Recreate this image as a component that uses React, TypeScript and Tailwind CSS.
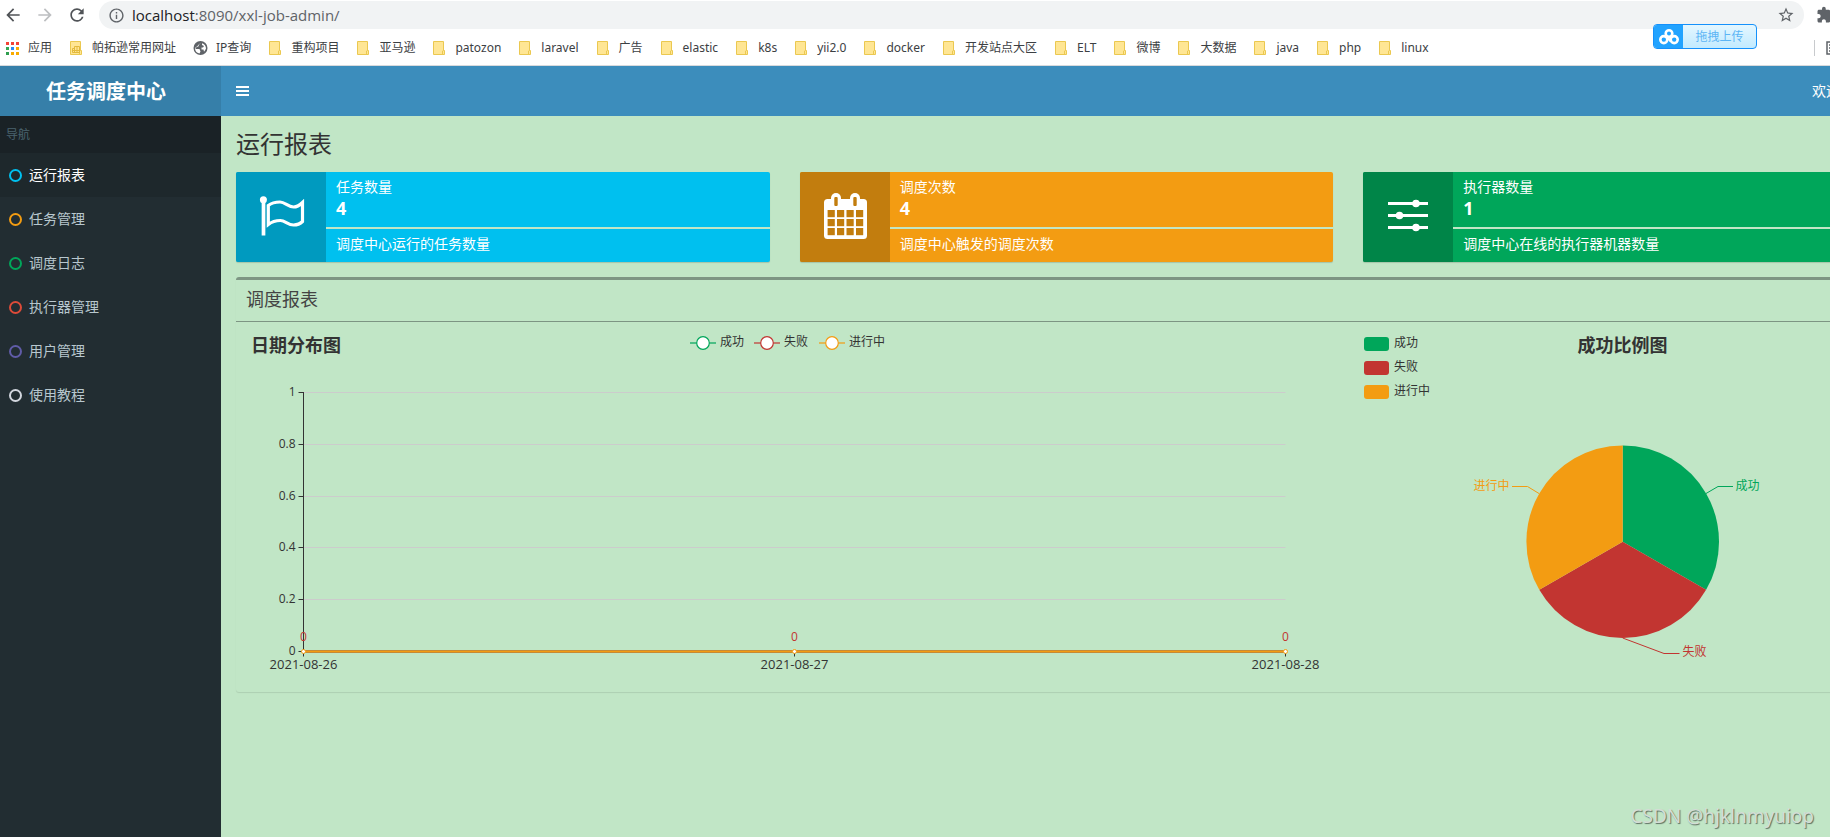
import type { ReactNode } from "react";
import {
  MdArrowBack,
  MdArrowForward,
  MdExtension,
  MdOutlineInfo,
  MdRefresh,
  MdStarBorder,
} from "react-icons/md";

type BookmarkKind = "apps" | "sheet" | "globe" | "folder";

const bookmarks: { label: string; icon: BookmarkKind }[] = [
  { label: "应用", icon: "apps" },
  { label: "帕拓逊常用网址", icon: "sheet" },
  { label: "IP查询", icon: "globe" },
  { label: "重构项目", icon: "folder" },
  { label: "亚马逊", icon: "folder" },
  { label: "patozon", icon: "folder" },
  { label: "laravel", icon: "folder" },
  { label: "广告", icon: "folder" },
  { label: "elastic", icon: "folder" },
  { label: "k8s", icon: "folder" },
  { label: "yii2.0", icon: "folder" },
  { label: "docker", icon: "folder" },
  { label: "开发站点大区", icon: "folder" },
  { label: "ELT", icon: "folder" },
  { label: "微博", icon: "folder" },
  { label: "大数据", icon: "folder" },
  { label: "java", icon: "folder" },
  { label: "php", icon: "folder" },
  { label: "linux", icon: "folder" },
];

const appDots = [
  "#f44336", "#f44336", "#f44336",
  "#34a853", "#2b8af7", "#f9ab00",
  "#2f9e4f", "#f9ab00", "#f9ab00",
];

function BookmarkIcon({ kind }: { kind: BookmarkKind }) {
  if (kind === "globe") {
    return (
      <svg viewBox="0 0 16 16" className="size-4 shrink-0" aria-hidden="true">
        <circle cx="8.500" cy="8" r="7" fill="#5f6368" />
        <path d="M9 3L6.500 4.500L7 6L4 7.500L3.500 9H7.500L8.500 11.500L7.500 13.500C4.500 13 3 11 3 8" fill="#fff" />
        <path d="M10 3.200C12.500 4 14 6 14 8.500C13.600 9.800 12.800 11 12 11.800L11.500 9.500H9.500V7.500H11L12 6L10 5Z" fill="#fff" />
      </svg>
    );
  }
  if (kind === "apps") {
    return (
      <svg viewBox="0 0 16 16" className="size-4 shrink-0" aria-hidden="true">
        {appDots.map((c, i) => (
          <rect key={i} x={2 + (i % 3) * 5} y={2 + Math.floor(i / 3) * 5} width="3" height="3" fill={c} />
        ))}
      </svg>
    );
  }
  return (
    <svg viewBox="0 0 16 16" className="size-4 shrink-0" aria-hidden="true">
      <path d="M2.5 1.5h10v9h1v4h-11z" fill="#ffe694" stroke="#ebc850" />
      <path d="M11.5 14.5v-3.5l1-0.5" fill="none" stroke="#ebc850" />
      {kind === "sheet" && (
        <path d="M6.5 6.5h5v6h-7v-4h2zM4.5 10.5h7M6.5 8v4.500M9 6.500v6" fill="none" stroke="#e3b93c" />
      )}
    </svg>
  );
}

function BrowserBar() {
  return (
    <div className="relative border-b border-[#d8dadd] bg-white">
      <div className="flex h-[30px] items-center gap-3 pl-[3px]">
        <button type="button" aria-label="后退" className="text-[#505357]">
          <MdArrowBack className="size-5" />
        </button>
        <button type="button" aria-label="前进" className="text-[#bdbfc1]">
          <MdArrowForward className="size-5" />
        </button>
        <button type="button" aria-label="刷新" className="text-[#505357]">
          <MdRefresh className="size-5" />
        </button>
        <div className="flex h-7 flex-1 items-center rounded-full bg-[#f1f3f4] px-[9px]">
          <MdOutlineInfo className="size-[17px] shrink-0 text-[#5f6368]" />
          <a href="#url" className="flex-1 pl-[7px] text-[15px] leading-7 text-[#5f6368]">
            <span className="text-[#202124]">localhost</span>:8090/xxl-job-admin/
          </a>
          <button type="button" aria-label="收藏" className="text-[#5f6368]">
            <MdStarBorder className="size-[18px]" />
          </button>
        </div>
        <button type="button" aria-label="扩展程序" className="-mr-1 w-[18px] overflow-hidden text-[#5f6368]">
          <MdExtension className="size-[18px]" />
        </button>
      </div>
      <div className="flex h-[35px] items-center justify-between overflow-hidden">
        <nav className="flex items-center gap-4 pl-1">
          {bookmarks.map((b) => (
            <a
              key={b.label}
              href="#bookmark"
              className="flex items-center gap-2 whitespace-nowrap font-['Noto_Sans','Noto_Sans_CJK_SC',sans-serif] text-[12px] leading-4 text-[#3c4043]"
            >
              <BookmarkIcon kind={b.icon} />
              {b.label}
            </a>
          ))}
        </nav>
        <div className="flex items-center gap-[11px]">
          <span className="h-4 w-px bg-[#c8cacd]" />
          <svg viewBox="0 0 4 16" className="h-4 w-1" aria-hidden="true">
            <path d="M4 2H1v12h3M3 5h1M3 8h1M3 11h1" fill="none" stroke="#5f6368" strokeWidth="1.500" />
          </svg>
        </div>
      </div>
      <button
        type="button"
        className="absolute right-[73px] top-6 flex h-[25px] w-[104px] items-stretch overflow-hidden rounded border border-[#1591fb] bg-linear-to-b from-[#e4f6ff] to-[#c2ebff]"
      >
        <span className="flex w-[29px] items-center justify-center bg-[#22a3ff]">
          <svg viewBox="0 0 20 16" className="h-4 w-5" fill="none" stroke="#fff" strokeWidth="2.600" aria-hidden="true">
            <circle cx="10" cy="4.600" r="3.300" />
            <circle cx="4.800" cy="10.600" r="3.500" />
            <circle cx="15.200" cy="10.600" r="3.500" />
            <path d="M8 8l4 4.500" />
          </svg>
        </span>
        <span className="flex-1 text-center text-[12px] leading-[23px] text-[#5cb5f5]">拖拽上传</span>
      </button>
    </div>
  );
}

const menu = [
  { label: "运行报表", ring: "border-[#00c0ef]", active: true },
  { label: "任务管理", ring: "border-[#f39c12]", active: false },
  { label: "调度日志", ring: "border-[#00a65a]", active: false },
  { label: "执行器管理", ring: "border-[#dd4b39]", active: false },
  { label: "用户管理", ring: "border-[#605ca8]", active: false },
  { label: "使用教程", ring: "border-[#d2d6de]", active: false },
];

function Sidebar() {
  return (
    <aside className="w-[221px] shrink-0 bg-[#222d32]">
      <div className="bg-[#1a2226] py-2.5 pl-1.5 text-[12px] leading-[17px] text-[#4b646f]">导航</div>
      <ul>
        {menu.map((m) => (
          <li key={m.label}>
            <a
              href="#menu"
              className={`flex h-11 items-center gap-[7px] pl-[9px] text-[14px] leading-5 ${
                m.active ? "bg-[#1e282c] text-white" : "text-[#b8c7ce]"
              }`}
            >
              <span className={`size-[13px] rounded-full border-2 ${m.ring}`} />
              {m.label}
            </a>
          </li>
        ))}
      </ul>
    </aside>
  );
}

function FlagIcon() {
  return (
    <svg viewBox="0 0 90 90" className="size-[90px]" fill="none" stroke="#fff" aria-hidden="true">
      <circle cx="27.400" cy="27.800" r="3.500" fill="#fff" stroke="none" />
      <path d="M27.500 28V63.500" strokeWidth="3.700" />
      <path
        d="M32.300 33.500C36 30.500 40 30 44 30C49 30 52 35 57.500 35C61 35 64 33 66.500 30.500V49.500C64 52 61 53 57.500 53C52 53 49 48.500 44.500 48.500C40 48.500 36 49.500 32.300 52.500Z"
        strokeWidth="3.200"
      />
    </svg>
  );
}

function CalendarIcon() {
  const cols = [27.6, 37, 46.5, 56];
  const rows = [38, 47, 56];
  return (
    <svg viewBox="0 0 90 90" className="size-[90px]" aria-hidden="true">
      <rect x="24" y="27" width="43" height="40" rx="3.500" fill="#fff" />
      {[36, 55].map((x) => (
        <g key={x}>
          <rect x={x - 5} y="21" width="10" height="16" rx="5" fill="#fff" />
          <rect x={x - 1.7} y="25" width="3.400" height="9" rx="1" fill="#c27d0e" />
        </g>
      ))}
      {rows.map((y) => cols.map((x) => <rect key={`${x}-${y}`} x={x} y={y} width="7.200" height="7.200" fill="#c27d0e" />))}
    </svg>
  );
}

function SlidersIcon() {
  return (
    <svg viewBox="0 0 90 90" className="size-[90px]" fill="#fff" stroke="#fff" strokeWidth="3" aria-hidden="true">
      <path d="M25 31.500H65M25 43.500H65M25 55.500H65" />
      <circle cx="53" cy="31.500" r="2.300" />
      <circle cx="36.500" cy="43.500" r="2.300" />
      <circle cx="53" cy="55.500" r="2.300" />
    </svg>
  );
}

interface InfoBoxProps {
  title: string;
  value: number;
  note: string;
  color: string;
  iconColor: string;
  icon: ReactNode;
}

function InfoBox({ title, value, note, color, iconColor, icon }: InfoBoxProps) {
  return (
    <section className={`flex h-[90px] min-w-0 flex-1 overflow-hidden rounded-xs text-white shadow-[0_1px_1px_rgba(0,0,0,0.15)] ${color}`}>
      <div className={`w-[90px] shrink-0 ${iconColor}`}>{icon}</div>
      <div className="flex-1 py-[5px] text-[14px] leading-5">
        <h2 className="px-2.5">{title}</h2>
        <p className="px-2.5 pb-0.5 text-[18px] font-bold leading-[23px]">{value}</p>
        <div className="my-[5px] h-0.5 bg-[#c1e6c6]" />
        <p className="px-2.5">{note}</p>
      </div>
    </section>
  );
}

const GREEN = "#00a65a";
const RED = "#c23531";
const ORANGE = "#f39c12";

function LineChart() {
  const yTicks = [
    { y: 60.5, label: "1" },
    { y: 112.5, label: "0.8" },
    { y: 164.5, label: "0.6" },
    { y: 215.5, label: "0.4" },
    { y: 267.5, label: "0.2" },
    { y: 319.5, label: "0" },
  ];
  const days = [
    { x: 57.5, label: "2021-08-26" },
    { x: 548.5, label: "2021-08-27" },
    { x: 1039.5, label: "2021-08-28" },
  ];
  const legend = [
    { x: 457, color: GREEN, label: "成功" },
    { x: 521, color: RED, label: "失败" },
    { x: 586, color: ORANGE, label: "进行中" },
  ];
  return (
    <svg viewBox="0 0 1084 350" className="h-auto w-full overflow-visible text-[12px]" fill="#333">
      <text x="5" y="20" className="text-[18px] font-bold">日期分布图</text>
      {legend.map((l) => (
        <g key={l.label}>
          <path d={`M${l.x - 13} 11h26`} stroke={l.color} strokeWidth="2" opacity="0.600" />
          <circle cx={l.x} cy="11" r="6.300" fill="#fff" stroke={l.color} strokeWidth="1.200" />
          <text x={l.x + 17} y="14">{l.label}</text>
        </g>
      ))}
      {yTicks.map((t) => (
        <g key={t.label}>
          <path d={`M57.500 ${t.y}H1039.500`} stroke="#ccc" />
          <path d={`M52.500 ${t.y}h5`} stroke="#333" />
          <text x="49.500" y={t.y + 3} textAnchor="end">{t.label}</text>
        </g>
      ))}
      <path d="M57.500 60V324" stroke="#333" />
      {days.map((d) => (
        <path key={d.label} d={`M${d.x} 320v4.500`} stroke="#333" />
      ))}
      <path d="M57.500 319.500H1039.500" stroke="#c68a35" strokeWidth="3" />
      <path d="M57.500 319.500H1039.500" stroke={ORANGE} strokeWidth="1" />
      {days.map((d) => (
        <g key={d.label}>
          <circle cx={d.x} cy="319.500" r="2" fill="#fff" stroke={ORANGE} />
          <text x={d.x} y="309" textAnchor="middle" fill={RED}>0</text>
          <text x={d.x} y="337" textAnchor="middle" className="text-[13px]">{d.label}</text>
        </g>
      ))}
    </svg>
  );
}

function PieChart() {
  const legend = [
    { y: 5, color: GREEN, label: "成功" },
    { y: 29, color: RED, label: "失败" },
    { y: 53, color: ORANGE, label: "进行中" },
  ];
  return (
    <svg viewBox="0 0 527 350" className="h-auto w-full overflow-visible text-[12px]" fill="#333">
      {legend.map((l) => (
        <g key={l.label}>
          <rect x="4" y={l.y} width="25" height="14" rx="3" fill={l.color} />
          <text x="34" y={l.y + 10}>{l.label}</text>
        </g>
      ))}
      <text x="262.500" y="20" textAnchor="middle" className="text-[18px] font-bold">成功比例图</text>
      <path d="M262.700 209.700V113.400A96.300 96.300 0 0 1 346.100 257.850Z" fill={GREEN} />
      <path d="M262.700 209.700L346.100 257.850A96.300 96.300 0 0 1 179.300 257.850Z" fill={RED} />
      <path d="M262.700 209.700L179.300 257.850A96.300 96.300 0 0 1 262.700 113.400Z" fill={ORANGE} />
      <g fill="none">
        <path d="M346 161.500L358 154.500H373" stroke={GREEN} />
        <path d="M179 161.500L167.500 154.500H152" stroke={ORANGE} />
        <path d="M262.700 306L304 321.500H319.500" stroke={RED} />
      </g>
      <text x="375.500" y="158" fill={GREEN}>成功</text>
      <text x="149.500" y="158" textAnchor="end" fill={ORANGE}>进行中</text>
      <text x="322.500" y="324" fill={RED}>失败</text>
    </svg>
  );
}

export default function App() {
  return (
    <div className="relative flex min-h-screen flex-col overflow-hidden bg-[#c1e6c6] font-['Open_Sans','Noto_Sans_CJK_SC',sans-serif] text-[#333]">
      <BrowserBar />
      <header className="flex h-[50px] bg-[#3c8dbc] text-white">
        <a href="#home" className="w-[221px] shrink-0 bg-[#367fa9] pr-[9px] text-center text-[20px] font-bold leading-[52px]">
          任务调度中心
        </a>
        <button type="button" aria-label="切换导航" className="px-[15px]">
          <svg viewBox="0 0 13 12" className="h-3 w-[13px]" aria-hidden="true">
            <path d="M0 2h13M0 6h13M0 10h13" stroke="#fff" strokeWidth="2" />
          </svg>
        </button>
        <a href="#user" className="ml-auto w-[18px] overflow-hidden whitespace-nowrap text-[14px] leading-[50px]">欢迎</a>
      </header>
      <div className="flex flex-1">
        <Sidebar />
        <main className="min-w-0 flex-1">
          <div className="w-[calc(100%+82px)] px-[15px] pt-[15px]">
            <h1 className="text-[24px] leading-[26px]">运行报表</h1>
            <div className="mt-[15px] flex gap-[30px]">
              <InfoBox title="任务数量" value={4} note="调度中心运行的任务数量" color="bg-[#00c0ef]" iconColor="bg-[#009abf]" icon={<FlagIcon />} />
              <InfoBox title="调度次数" value={4} note="调度中心触发的调度次数" color="bg-[#f39c12]" iconColor="bg-[#c27d0e]" icon={<CalendarIcon />} />
              <InfoBox title="执行器数量" value={1} note="调度中心在线的执行器机器数量" color="bg-[#00a65a]" iconColor="bg-[#008548]" icon={<SlidersIcon />} />
            </div>
            <section className="mt-[15px] rounded-[3px] border-t-[3px] border-[#7d9583] shadow-[0_1px_1px_rgba(0,0,0,0.1)]">
              <h3 className="border-b border-[#7d9583] px-2.5 pb-[11px] pt-[9px] text-[18px] leading-[21px] text-[#444]">调度报表</h3>
              <div className="flex gap-[30px] p-2.5">
                <div className="min-w-0 grow-[1084] basis-0"><LineChart /></div>
                <div className="min-w-0 grow-[527] basis-0"><PieChart /></div>
              </div>
            </section>
          </div>
        </main>
      </div>
      <p className="absolute bottom-2 right-4 font-['Noto_Sans',sans-serif] text-[19px] leading-[26px] text-[#d3ddd5] [text-shadow:1px_1px_1px_#5d6f61]">
        CSDN @hjklnmyuiop
      </p>
    </div>
  );
}
